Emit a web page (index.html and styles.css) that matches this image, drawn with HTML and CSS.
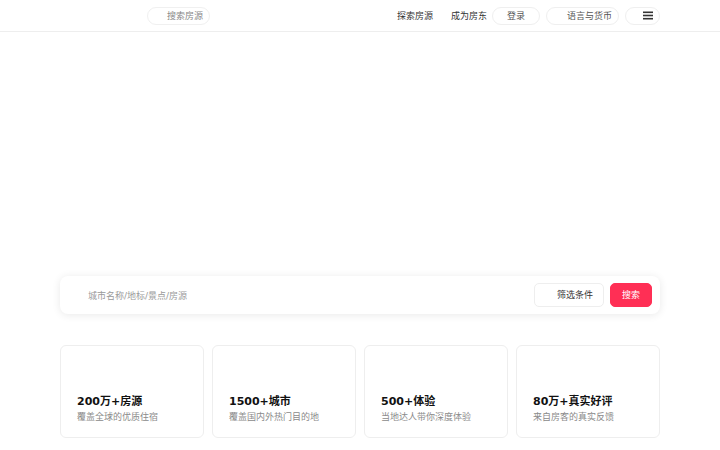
FILE: index.html
```html
<!DOCTYPE html>
<html lang="zh-CN">
<head>
<meta charset="utf-8">
<title>房源搜索</title>
<link rel="stylesheet" href="styles.css">
</head>
<body>
<header class="topbar">
  <div class="topbar-inner">
    <div class="logo-slot"></div>
    <button class="search-pill">搜索房源</button>
    <nav class="nav">
      <a class="nav-link" href="#">探索房源</a>
      <a class="nav-link" href="#">成为房东</a>
      <button class="pill pill-login">登录</button>
      <button class="pill pill-lang">语言与货币</button>
      <button class="pill pill-menu" aria-label="菜单">
        <svg width="10" height="9" viewBox="0 0 10 9"><rect x="0" y="0.5" width="10" height="1.6" fill="#333"/><rect x="0" y="3.7" width="10" height="1.6" fill="#333"/><rect x="0" y="6.9" width="10" height="1.6" fill="#333"/></svg>
      </button>
    </nav>
  </div>
</header>
<main class="main">
  <section class="hero"></section>
  <section class="searchbar">
    <span class="placeholder">城市名称/地标/景点/房源</span>
    <button class="btn btn-filter">筛选条件</button>
    <button class="btn btn-search">搜索</button>
  </section>
  <section class="stats">
    <div class="stat">
      <div class="stat-title">200万+房源</div>
      <div class="stat-sub">覆盖全球的优质住宿</div>
    </div>
    <div class="stat">
      <div class="stat-title">1500+城市</div>
      <div class="stat-sub">覆盖国内外热门目的地</div>
    </div>
    <div class="stat">
      <div class="stat-title">500+体验</div>
      <div class="stat-sub">当地达人带你深度体验</div>
    </div>
    <div class="stat">
      <div class="stat-title">80万+真实好评</div>
      <div class="stat-sub">来自房客的真实反馈</div>
    </div>
  </section>
</main>
</body>
</html>
```
FILE: styles.css
```css
* { box-sizing: border-box; }
html, body { margin: 0; padding: 0; background: #fff; }
body {
  font-family: "DejaVu Sans", "Noto Sans CJK SC", sans-serif;
  color: #222;
}
button { font-family: inherit; cursor: pointer; }
a { text-decoration: none; color: inherit; }

.topbar {
  height: 32px;
  border-bottom: 1px solid #eeeeee;
}
.topbar-inner {
  width: 600px;
  height: 31px;
  margin: 0 auto;
  display: flex;
  align-items: center;
}
.logo-slot { width: 79px; height: 18px; margin-right: 8px; }
.search-pill {
  height: 18px;
  padding: 0 6px 0 19px;
  border: 1px solid #f0f0f0;
  border-radius: 999px;
  background: #fff;
  font-size: 9px;
  color: #888;
  line-height: 16px;
}
.nav {
  margin-left: auto;
  display: flex;
  align-items: center;
}
.nav-link {
  font-size: 9px;
  color: #333;
  margin-right: 18px;
}
.nav-link:nth-child(2) { margin-right: 5px; }
.pill {
  height: 18px;
  border: 1px solid #efefef;
  border-radius: 999px;
  background: #fff;
  font-size: 9px;
  color: #555;
  line-height: 16px;
  padding: 0;
}
.pill-login { width: 48px; margin-right: 6px; }
.pill-lang { padding: 0 6px 0 20px; margin-right: 6px; }
.pill-menu {
  width: 35px;
  display: flex;
  align-items: center;
  justify-content: flex-end;
  padding-right: 6px;
}
.pill-menu svg { display: block; }

.main { width: 600px; margin: 0 auto; }
.hero { height: 244px; }

.searchbar {
  height: 38px;
  display: flex;
  align-items: center;
  padding: 0 8px 0 28px;
  background: #fff;
  border-radius: 8px;
  box-shadow: 0 1px 8px rgba(0, 0, 0, 0.09);
}
.placeholder {
  font-size: 9px;
  color: #9a9a9a;
  flex: 1;
}
.btn {
  height: 24px;
  border-radius: 5px;
  font-size: 9px;
  line-height: 22px;
}
.btn-filter {
  background: #fff;
  border: 1px solid #eeeeee;
  color: #333;
  padding: 0 10px 0 22px;
  margin-right: 6px;
}
.btn-search {
  background: #ff2f55;
  border: 1px solid #ff2f55;
  color: #fff;
  width: 42px;
  padding: 0;
}

.stats {
  margin-top: 31px;
  display: grid;
  grid-template-columns: repeat(4, 1fr);
  gap: 8px;
}
.stat {
  height: 93px;
  border: 1px solid #eeeeee;
  border-radius: 6px;
  padding: 49px 16px 0 16px;
}
.stat-title {
  font-size: 11px;
  font-weight: bold;
  color: #111;
  line-height: 14px;
  white-space: nowrap;
}
.stat-sub {
  font-size: 9px;
  color: #8a8a8a;
  line-height: 14px;
  margin-top: 1px;
  white-space: nowrap;
}
```
